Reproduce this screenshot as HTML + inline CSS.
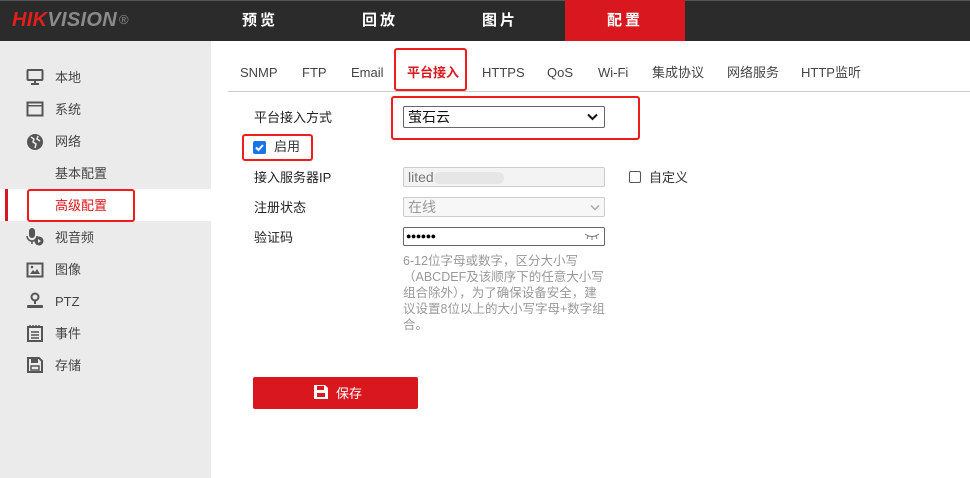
<!DOCTYPE html>
<html><head><meta charset="utf-8"><style>
*{margin:0;padding:0;box-sizing:border-box}
body{width:970px;height:478px;overflow:hidden;background:#fff;font-family:"Liberation Sans","Noto Sans CJK SC",sans-serif;font-size:13px;line-height:15px;color:#333;position:relative}
.a{position:absolute}
.hdr{left:0;top:0;width:970px;height:41px;background:#2b2b2b;border-top:1px solid #555}
.logo{left:12px;top:9px;font-size:20px;line-height:22px;font-weight:bold;font-style:italic;letter-spacing:0.3px}
.nav{top:0;height:41px;width:120px;color:#fff;font-size:15px;font-weight:bold;text-align:center;line-height:41px;letter-spacing:3px}
.side{left:0;top:41px;width:211px;height:437px;background:#ebebeb}
.si{left:55px;font-size:13px;color:#444}
.ic{left:26px;width:18px;height:18px}
.tab{top:65px;font-size:13px;color:#444}
.lbl{left:254px;font-size:13px;color:#222}
.rb{border:2px solid #f01c1c;border-radius:3px}
.inp{left:403px;width:202px;height:20px;border:1px solid #ccc;border-radius:2px;background:#f3f3f3;color:#888;padding-left:4px;line-height:18px;font-size:14px}
.help{left:403px;top:253px;width:203px;font-size:12.5px;line-height:16px;color:#999}
</style></head><body>
<div class="a hdr"></div>
<div class="a logo"><span style="color:#e0201c">HIK</span><span style="color:#8a8a8a">VISION</span><span style="color:#8a8a8a;font-size:13px;font-style:normal;font-weight:normal;vertical-align:top;margin-left:2px">®</span></div>
<div class="a nav" style="left:200px">预览</div>
<div class="a nav" style="left:320px">回放</div>
<div class="a nav" style="left:440px">图片</div>
<div class="a nav" style="left:565px;background:#d9171e">配置</div>

<div class="a side"></div>
<div class="a" style="left:0;top:189px;width:211px;height:32px;background:#fff"></div>
<div class="a" style="left:5px;top:189px;width:3px;height:32px;background:#d9171e"></div>
<div class="a rb" style="left:27px;top:189px;width:108px;height:33px"></div>

<svg class="a ic" style="top:68px" viewBox="0 0 18 18"><rect x="1.5" y="2" width="15" height="10" rx="1" fill="none" stroke="#555" stroke-width="2"/><rect x="8" y="12" width="2" height="3" fill="#555"/><rect x="5" y="15" width="8" height="2" fill="#555"/></svg>
<div class="a si" style="top:70px">本地</div>
<svg class="a ic" style="top:100px" viewBox="0 0 18 18"><rect x="1.5" y="2.5" width="15" height="13" fill="none" stroke="#555" stroke-width="2"/><rect x="2" y="5" width="14" height="1.5" fill="#555"/></svg>
<div class="a si" style="top:102px">系统</div>
<svg class="a ic" style="top:133px" viewBox="0 0 18 18"><circle cx="9" cy="9" r="8" fill="#555"/><path d="M5 4l3 2-1 3 3 2-1 4M12 3l-1 3 3 2" stroke="#ebebeb" stroke-width="1.5" fill="none"/></svg>
<div class="a si" style="top:134px">网络</div>
<div class="a si" style="top:166px">基本配置</div>
<div class="a si" style="top:198px;color:#d9171e">高级配置</div>
<svg class="a ic" style="top:228px" viewBox="0 0 18 18"><rect x="3" y="0" width="6" height="10" rx="3" fill="#555"/><path d="M1 8a5 5 0 0 0 10 0M6 13v3" stroke="#555" stroke-width="1.5" fill="none"/><circle cx="13" cy="13" r="4.5" fill="#555"/><path d="M12 11v4l3-2z" fill="#ebebeb"/></svg>
<div class="a si" style="top:230px">视音频</div>
<svg class="a ic" style="top:261px" viewBox="0 0 18 18"><rect x="1.5" y="2.5" width="15" height="13" fill="none" stroke="#555" stroke-width="2"/><path d="M4 13l3-4 2 2 2-3 3 5z" fill="#555"/><circle cx="6" cy="6" r="1.3" fill="#555"/></svg>
<div class="a si" style="top:262px">图像</div>
<svg class="a ic" style="top:292px" viewBox="0 0 18 18"><circle cx="9" cy="5" r="3.5" fill="none" stroke="#555" stroke-width="2"/><rect x="8" y="9" width="2" height="3" fill="#555"/><rect x="1" y="13" width="16" height="3" rx="1" fill="#555"/></svg>
<div class="a si" style="top:294px">PTZ</div>
<svg class="a ic" style="top:324px" viewBox="0 0 18 18"><rect x="2" y="3" width="14" height="14" fill="none" stroke="#555" stroke-width="2"/><path d="M4 1v3M7 1v3M10 1v3M13 1v3M5 8h8M5 11h8M5 14h8" stroke="#555" stroke-width="1.5"/></svg>
<div class="a si" style="top:326px">事件</div>
<svg class="a ic" style="top:356px" viewBox="0 0 18 18"><path d="M2 2h11l3 3v11H2z" fill="none" stroke="#555" stroke-width="2"/><rect x="5" y="3" width="7" height="4" fill="#555"/><rect x="5" y="10" width="8" height="4" fill="none" stroke="#555" stroke-width="1.5"/></svg>
<div class="a si" style="top:358px">存储</div>

<div class="a tab" style="left:240px">SNMP</div>
<div class="a tab" style="left:302px">FTP</div>
<div class="a tab" style="left:351px">Email</div>
<div class="a tab" style="left:407px;color:#d9171e;font-weight:bold">平台接入</div>
<div class="a tab" style="left:482px">HTTPS</div>
<div class="a tab" style="left:547px">QoS</div>
<div class="a tab" style="left:598px">Wi-Fi</div>
<div class="a tab" style="left:652px">集成协议</div>
<div class="a tab" style="left:727px">网络服务</div>
<div class="a tab" style="left:801px">HTTP监听</div>
<div class="a" style="left:228px;top:91px;width:742px;height:1px;background:#ccc"></div>
<div class="a rb" style="left:394px;top:48px;width:73px;height:43px"></div>

<div class="a lbl" style="top:110px">平台接入方式</div>
<div class="a rb" style="left:391px;top:96px;width:249px;height:44px"></div>
<div class="a" style="left:403px;top:106px;width:202px;height:22px;border:1px solid #666;border-radius:2px;font-size:14px;padding-left:4px;line-height:20px;color:#111">萤石云</div>
<svg class="a" style="left:587px;top:113px" width="11" height="8" viewBox="0 0 11 8"><path d="M1 1.5l4.5 4.5 4.5-4.5" stroke="#111" stroke-width="2" fill="none"/></svg>

<div class="a rb" style="left:242px;top:134px;width:71px;height:27px"></div>
<div class="a" style="left:253px;top:141px;width:13px;height:13px;background:#1a73e8;border-radius:2px"></div>
<svg class="a" style="left:253px;top:141px" width="13" height="13" viewBox="0 0 13 13"><path d="M3 6.5l2.5 2.5 4.5-5" stroke="#fff" stroke-width="2" fill="none"/></svg>
<div class="a" style="left:274px;top:139px">启用</div>

<div class="a lbl" style="top:170px">接入服务器IP</div>
<div class="a inp" style="top:167px;color:#777">lited<span style="display:inline-block;width:70px;height:12px;background:#e6e6e6;vertical-align:middle;border-radius:6px"></span></div>
<div class="a" style="left:629px;top:171px;width:12px;height:12px;border:1px solid #555;border-radius:2px"></div>
<div class="a" style="left:649px;top:170px">自定义</div>

<div class="a lbl" style="top:200px">注册状态</div>
<div class="a inp" style="top:197px;background:#f7f7f7;color:#999">在线</div>
<svg class="a" style="left:590px;top:204px" width="10" height="7" viewBox="0 0 10 7"><path d="M1 1.5l4 4 4-4" stroke="#aaa" stroke-width="1.5" fill="none"/></svg>

<div class="a lbl" style="top:230px">验证码</div>
<div class="a" style="left:403px;top:227px;width:202px;height:19px;border:1px solid #666;border-radius:2px;font-size:9px;padding-left:2px;line-height:17px;color:#000;letter-spacing:-0.5px">●●●●●●</div>
<svg class="a" style="left:584px;top:232px" width="16" height="8" viewBox="0 0 16 8"><path d="M1 2q7 5 14 0M4 4l-1 3M8 5v3M12 4l1 3" stroke="#777" stroke-width="1" fill="none"/></svg>

<div class="a help">6-12位字母或数字，区分大小写（ABCDEF及该顺序下的任意大小写组合除外），为了确保设备安全，建议设置8位以上的大小写字母+数字组合。</div>

<div class="a" style="left:253px;top:377px;width:165px;height:32px;background:#d9171e;border-radius:2px"></div>
<svg class="a" style="left:314px;top:385px" width="14" height="14" viewBox="0 0 14 14"><path d="M0 0h11l3 3v11H0z" fill="#fff"/><rect x="3" y="1" width="7" height="4" fill="#d9171e"/><rect x="3" y="8" width="8" height="4" fill="#d9171e"/></svg>
<div class="a" style="left:336px;top:386px;color:#fff;font-size:13px">保存</div>
</body></html>
